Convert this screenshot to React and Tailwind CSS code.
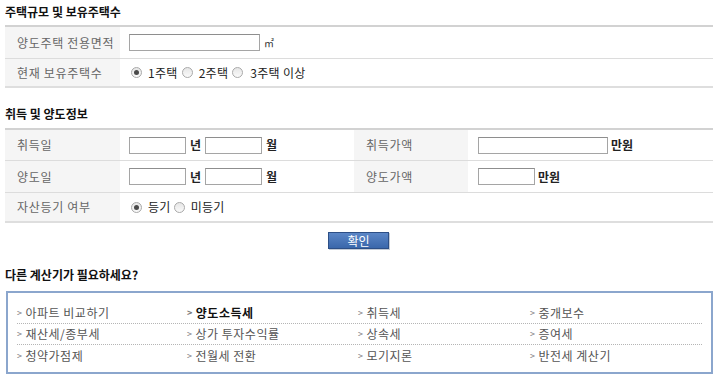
import React from 'react';

const font = { fontFamily: '"Noto Sans CJK KR", "Noto Sans", sans-serif' };

// small grey radio drawn with spans
const Radio = ({ checked }) => (
  <span className="inline-flex items-center justify-center w-[11px] h-[11px] rounded-full border border-[#a9a9a9] bg-gradient-to-b from-[#e6e6e6] to-[#fafafa]">
    {checked && <span className="w-[5px] h-[5px] rounded-full bg-[#4a4a4a]"></span>}
  </span>
);

const Box = ({ w }) => (
  <span className={`inline-block h-[17px] border border-[#a5a5a5] border-t-[#8e8e8e] bg-white ${w}`}></span>
);

const Label = ({ children }) => (
  <div className="flex items-center bg-[#f5f5f5] pl-[12px] text-[#666] tracking-[0.7px]">{children}</div>
);

const links = [
  ['아파트 비교하기', '양도소득세', '취득세', '중개보수'],
  ['재산세/종부세', '상가 투자수익률', '상속세', '증여세'],
  ['청약가점제', '전월세 전환', '모기지론', '반전세 계산기'],
];

export default function App() {
  return (
    <div className="w-[720px] h-[383px] bg-white text-[12px] text-[#222] overflow-hidden" style={font}>
      {/* section 1 */}
      <div className="h-[25px] pl-[5px] pt-[3px] font-bold text-[12px] leading-[18px] text-[#111]">주택규모 및 보유주택수</div>
      <div className="ml-[5px] mr-[7px] border-t-2 border-[#d2d2d2]">
        <div className="grid grid-cols-[115px_1fr] h-[32px] border-b border-[#dcdcdc]">
          <Label>양도주택 전용면적</Label>
          <div className="flex items-center pl-[9px] gap-[4px]">
            <Box w="w-[131px]" />
            <span className="text-[10px] text-[#333]">㎡</span>
          </div>
        </div>
        <div className="grid grid-cols-[115px_1fr] h-[29px] border-b-2 border-[#dedede]">
          <Label>현재 보유주택수</Label>
          <div className="flex items-center pl-[11px] text-[#222] tracking-[0.3px]">
            <Radio checked />
            <span className="ml-[6px] mr-[4px]">1주택</span>
            <Radio />
            <span className="ml-[6px] mr-[4px]">2주택</span>
            <Radio />
            <span className="ml-[7px]">3주택 이상</span>
          </div>
        </div>
      </div>

      {/* section 2 */}
      <div className="h-[40px] pl-[5px] pt-[17px] font-bold leading-[18px] text-[#111]">취득 및 양도정보</div>
      <div className="ml-[5px] mr-[7px] border-t-2 border-[#d2d2d2]">
        <div className="grid grid-cols-[115px_234px_114px_1fr] h-[31px] border-b border-[#dcdcdc]">
          <Label>취득일</Label>
          <div className="flex items-center pl-[9px]">
            <Box w="w-[57px]" />
            <span className="ml-[4px] mr-[4px] font-bold">년</span>
            <Box w="w-[57px]" />
            <span className="ml-[4px] font-bold">월</span>
          </div>
          <Label>취득가액</Label>
          <div className="flex items-center pl-[10px]">
            <Box w="w-[130px]" />
            <span className="ml-[3px] font-bold">만원</span>
          </div>
        </div>
        <div className="grid grid-cols-[115px_234px_114px_1fr] h-[32px] border-b border-[#dcdcdc]">
          <Label>양도일</Label>
          <div className="flex items-center pl-[9px]">
            <Box w="w-[57px]" />
            <span className="ml-[4px] mr-[4px] font-bold">년</span>
            <Box w="w-[57px]" />
            <span className="ml-[4px] font-bold">월</span>
          </div>
          <Label>양도가액</Label>
          <div className="flex items-center pl-[10px]">
            <Box w="w-[57px]" />
            <span className="ml-[3px] font-bold">만원</span>
          </div>
        </div>
        <div className="grid grid-cols-[115px_1fr] h-[30px] border-b-2 border-[#dedede]">
          <Label>자산등기 여부</Label>
          <div className="flex items-center pl-[11px] tracking-[0.3px]">
            <Radio checked />
            <span className="ml-[6px] mr-[3px]">등기</span>
            <Radio />
            <span className="ml-[6px]">미등기</span>
          </div>
        </div>
      </div>

      <div className="flex justify-center pt-[9px] pr-[3px]">
        <button className="w-[61px] h-[17px] flex items-center justify-center border border-[#2d4f86] bg-gradient-to-b from-[#5b86c6] to-[#3a67ab] text-white text-[12px] leading-none shadow-[1px_1px_0_#c4cbd6]">
          확인
        </button>
      </div>

      {/* other calculators */}
      <div className="h-[42px] pl-[5px] pt-[17px] font-bold leading-[18px] text-[#111]">다른 계산기가 필요하세요?</div>
      <div className="ml-[6px] mr-[7px] h-[83px] border-2 border-[#8ba6cd] px-[9px] pt-[10px]">
        {links.map((row, i) => (
          <div
            key={i}
            className={`grid grid-cols-[170px_171px_172px_1fr] h-[21px] items-center ${i < 2 ? 'border-b border-dotted border-[#b5b5b5]' : ''}`}
          >
            {row.map((t) => (
              <div key={t} className={`flex items-center tracking-[0.5px] ${t === '양도소득세' ? 'font-bold text-[#111]' : 'text-[#555]'}`}>
                <span className="text-[9px] text-[#777] mr-[3px]">&gt;</span>
                {t}
              </div>
            ))}
          </div>
        ))}
      </div>
    </div>
  );
}
